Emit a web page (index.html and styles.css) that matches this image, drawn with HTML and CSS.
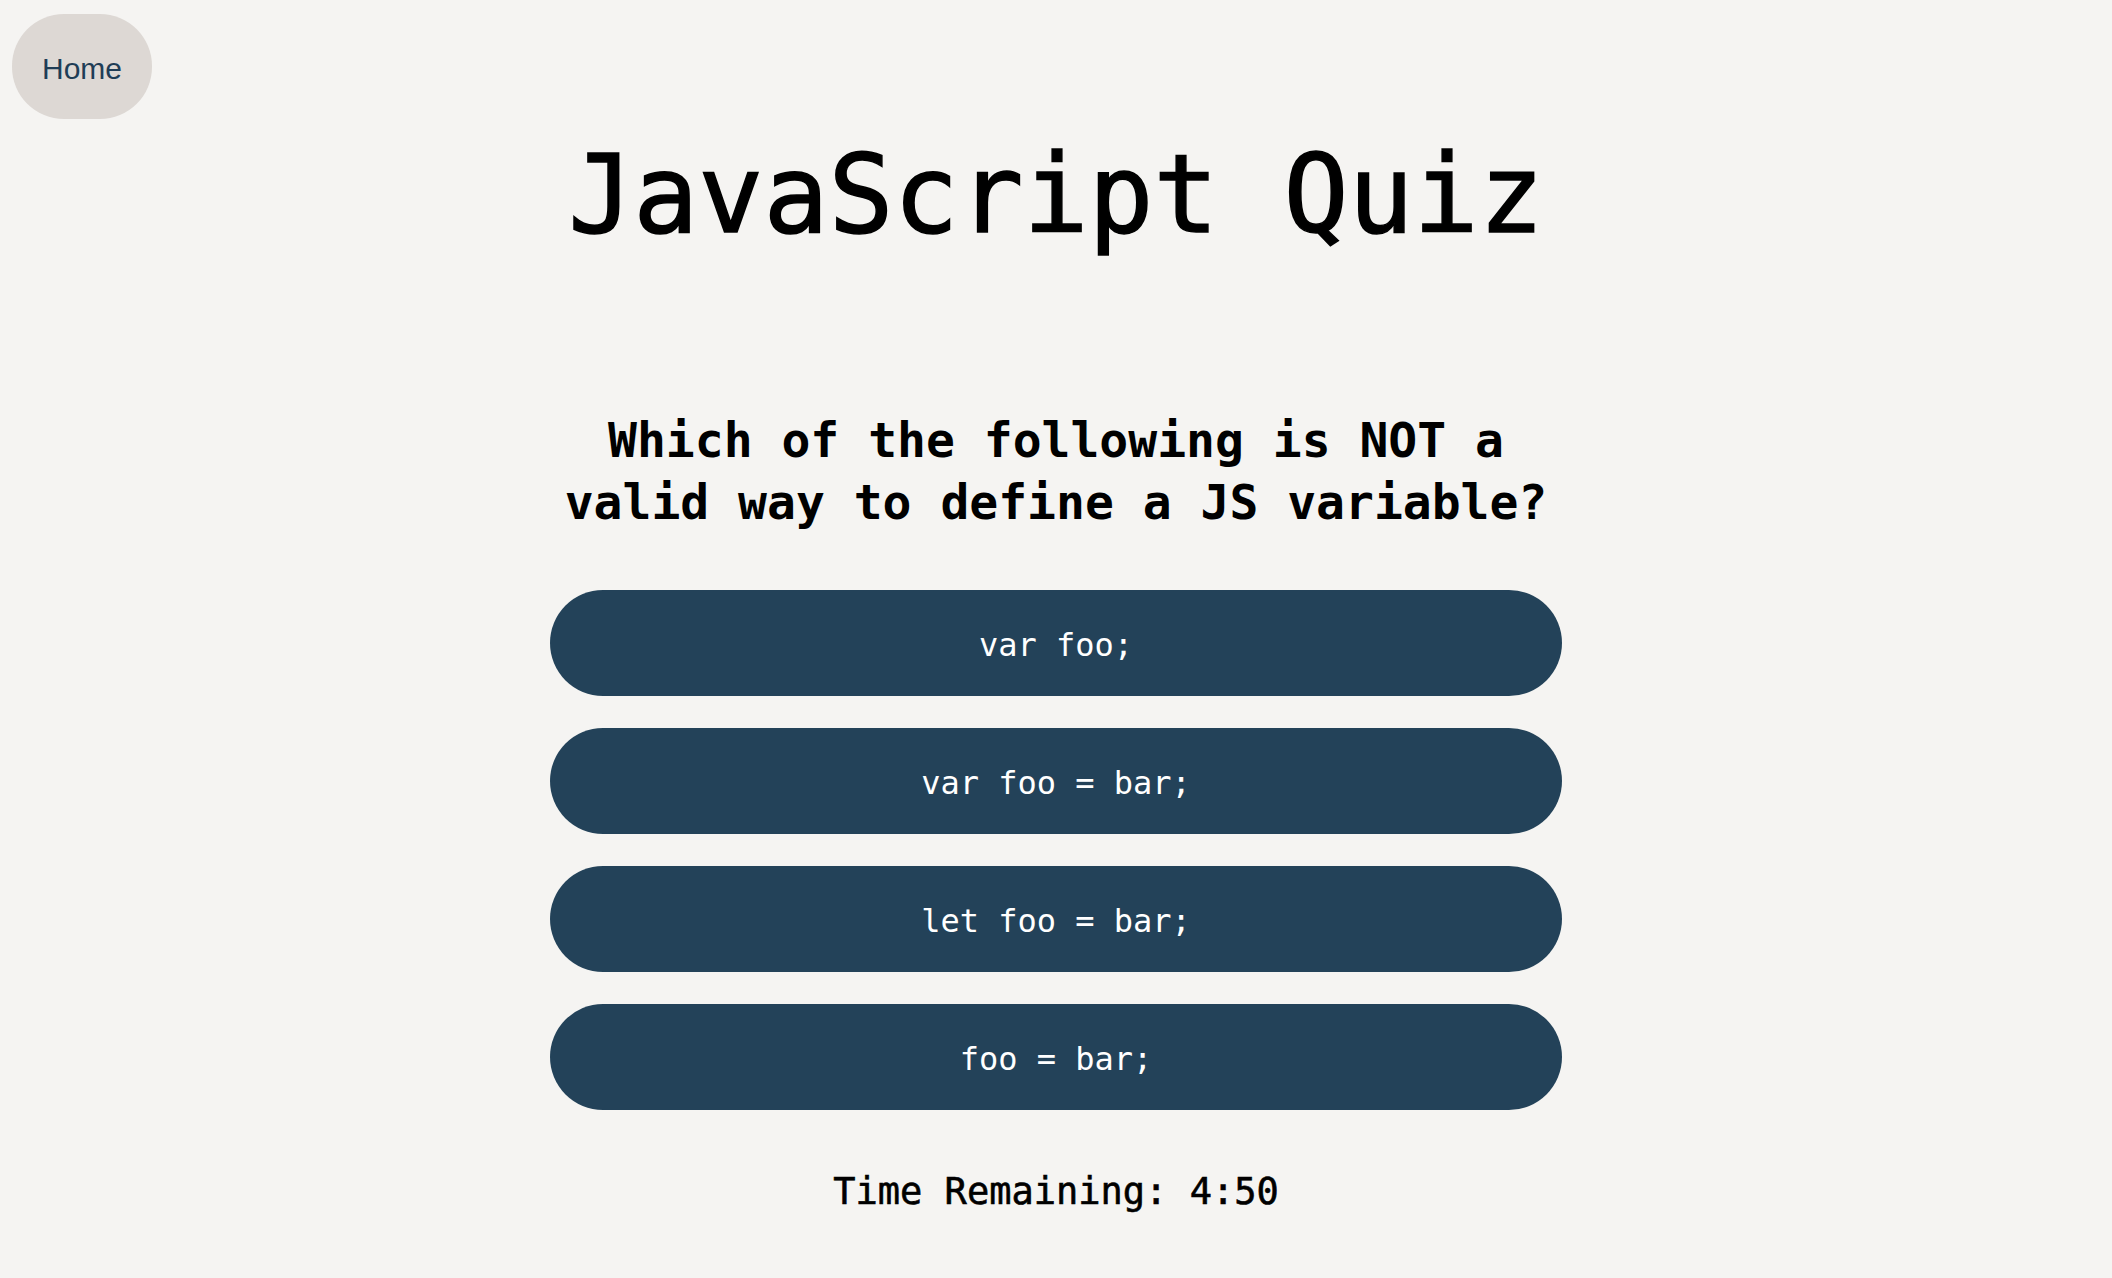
FILE: index.html
```html
<!DOCTYPE html>
<html lang="en">
<head>
<meta charset="utf-8">
<title>JavaScript Quiz</title>
<link rel="stylesheet" href="styles.css">
</head>
<body>
<header class="top-bar">
  <a class="home-btn" href="#">Home</a>
</header>
<main class="quiz">
  <h1 class="quiz-title">JavaScript Quiz</h1>
  <h2 class="question">Which of the following is NOT a<br>valid way to define a JS variable?</h2>
  <div class="answers">
    <button class="answer">var foo;</button>
    <button class="answer">var foo = bar;</button>
    <button class="answer">let foo = bar;</button>
    <button class="answer">foo = bar;</button>
  </div>
  <p class="timer">Time Remaining: 4:50</p>
</main>
</body>
</html>
```
FILE: styles.css
```css
html, body {
  margin: 0;
  padding: 0;
}

body {
  background: #f5f4f2;
  font-family: "DejaVu Sans Mono", "Liberation Mono", monospace;
  color: #000;
  min-height: 1278px;
}

.top-bar {
  display: flex;
  padding: 14px 0 0 12px;
}

.home-btn {
  display: block;
  padding: 37px 30px 33px;
  line-height: 35px;
  font-family: "Liberation Sans", Arial, sans-serif;
  font-size: 30px;
  color: #1f3d56;
  background: #ddd8d4;
  border-radius: 52px;
  text-decoration: none;
}

.quiz {
  display: flex;
  flex-direction: column;
  align-items: center;
}

.quiz-title {
  margin: 9px 0 0;
  font-size: 108px;
  line-height: 134px;
  font-weight: 400;
  text-align: center;
  -webkit-text-stroke: 1.5px #000;
}

.question {
  margin: 147px 0 0;
  font-size: 48px;
  line-height: 62px;
  font-weight: 700;
  text-align: center;
}

.answers {
  margin-top: 57px;
  display: flex;
  flex-direction: column;
  gap: 32px;
}

.answer {
  width: 1012px;
  height: 106px;
  border: none;
  border-radius: 53px;
  background: #234259;
  color: #fff;
  font-family: "DejaVu Sans Mono", monospace;
  font-size: 32px;
  display: flex;
  align-items: center;
  justify-content: center;
  padding: 3px 0 0;
  cursor: pointer;
}

.timer {
  margin: 60px 0 0;
  font-size: 37px;
  line-height: 44px;
  font-weight: 400;
  text-align: center;
  -webkit-text-stroke: 0.6px #000;
}
```
